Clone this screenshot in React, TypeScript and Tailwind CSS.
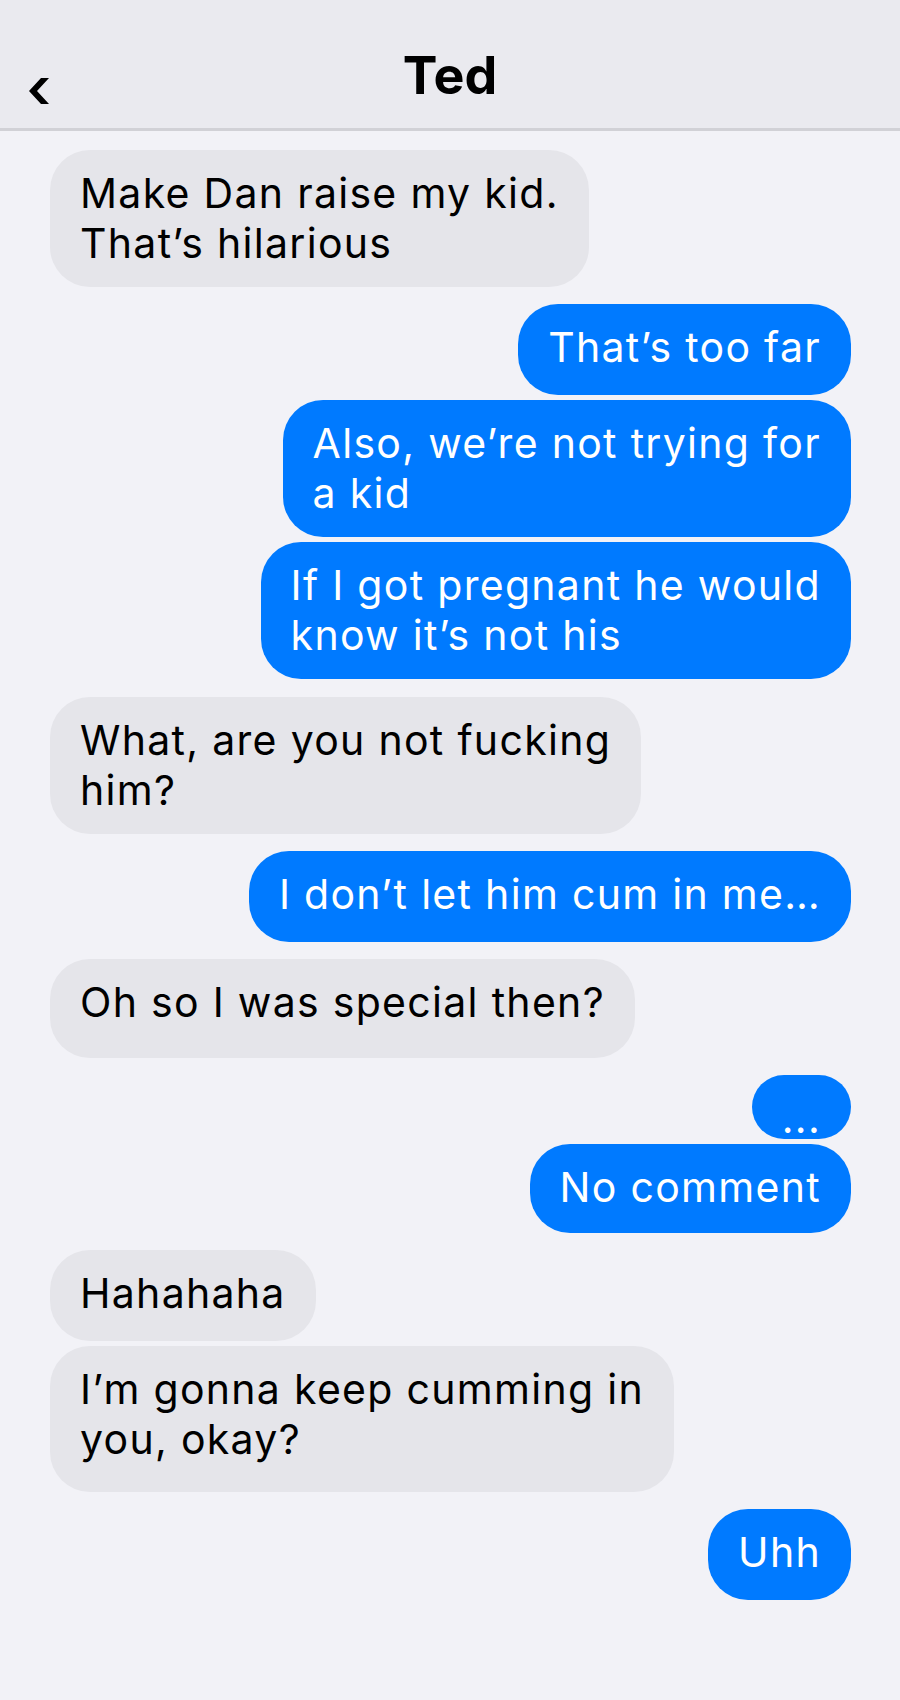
import React from 'react';

interface Message {
    id: number;
    fromMe: boolean;
    lines: string[];
    // spacing tweaks per bubble, taken from the screenshot
    pad: string;
    gap: string;
}

const messages: Message[] = [
    { id: 1, fromMe: false, lines: ['Make Dan raise my kid.', 'That’s hilarious'], pad: 'pb-[19px]', gap: 'mt-[19px]' },
    { id: 2, fromMe: true, lines: ['That’s too far'], pad: 'pb-[23px]', gap: 'mt-[17px]' },
    { id: 3, fromMe: true, lines: ['Also, we’re not trying for', 'a kid'], pad: 'pb-[19px]', gap: 'mt-[5px]' },
    { id: 4, fromMe: true, lines: ['If I got pregnant he would', 'know it’s not his'], pad: 'pb-[19px]', gap: 'mt-[5px]' },
    { id: 5, fromMe: false, lines: ['What, are you not fucking', 'him?'], pad: 'pb-[19px]', gap: 'mt-[18px]' },
    { id: 6, fromMe: true, lines: ['I don’t let him cum in me…'], pad: 'pb-[23px]', gap: 'mt-[17px]' },
    { id: 7, fromMe: false, lines: ['Oh so I was special then?'], pad: 'pb-[31px]', gap: 'mt-[17px]' },
    { id: 8, fromMe: true, lines: ['...'], pad: 'h-[64px]', gap: 'mt-[17px]' },
    { id: 9, fromMe: true, lines: ['No comment'], pad: 'pb-[21px]', gap: 'mt-[5px]' },
    { id: 10, fromMe: false, lines: ['Hahahaha'], pad: 'pb-[23px]', gap: 'mt-[17px]' },
    { id: 11, fromMe: false, lines: ['I’m gonna keep cumming in', 'you, okay?'], pad: 'pb-[28px]', gap: 'mt-[5px]' },
    { id: 12, fromMe: true, lines: ['Uhh'], pad: 'pb-[23px]', gap: 'mt-[17px]' },
];

const Bubble: React.FC<{ message: Message }> = ({ message }) => {
    const color = message.fromMe ? 'bg-[#007aff] text-white self-end' : 'bg-[#e5e5ea] text-black self-start';
    return (
        <div className={`${message.gap} ${color} ${message.pad} rounded-[40px] px-[30px] pt-[18px] text-[41px] leading-[50px] tracking-[1.3px] whitespace-nowrap`}>
            {message.lines.map((line, i) => (
                <div key={i}>{line}</div>
            ))}
        </div>
    );
};

export default function App() {
    return (
        <div className="min-h-[1700px] bg-[#f2f2f7]" style={{ fontFamily: 'Inter, "Noto Sans", sans-serif' }}>
            {/* Header */}
            <div className="grid h-[131px] grid-cols-[1fr_auto_1fr] border-b-[3px] border-[#d1d1d6] bg-[#eaeaef]">
                <div className="pl-[29px] pt-[78px]">
                    <svg width="20" height="26" viewBox="0 0 20 26">
                        <path d="M12 0 L20 0 L8 13 L20 26 L12 26 L0 13 Z" fill="#000" />
                    </svg>
                </div>
                <h1 className="pt-[46px] text-[52px] font-bold leading-[60px] text-black">Ted</h1>
                <div />
            </div>

            {/* Messages */}
            <div className="flex flex-col pl-[50px] pr-[49px]">
                {messages.map((m) => (
                    <Bubble key={m.id} message={m} />
                ))}
            </div>
        </div>
    );
}
